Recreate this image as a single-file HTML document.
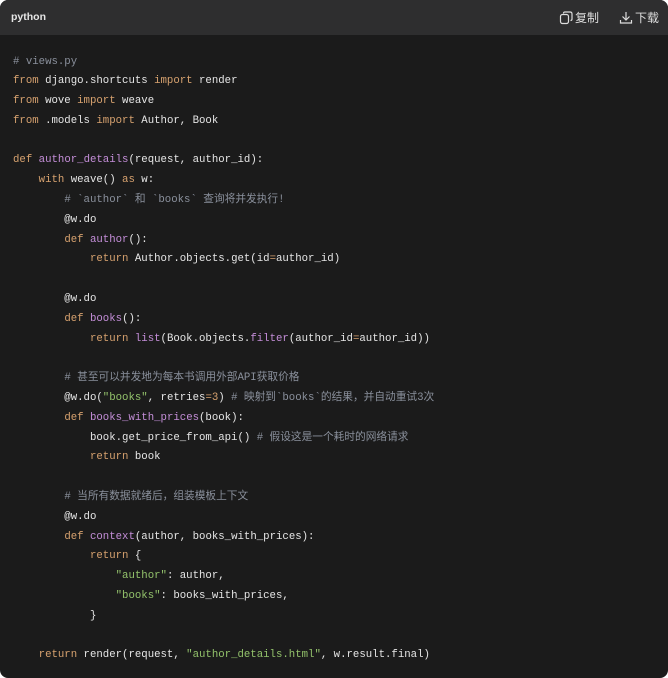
<!DOCTYPE html>
<html><head><meta charset="utf-8"><style>
html,body{margin:0;padding:0;background:#fff;width:668px;height:678px;overflow:hidden}
.box{position:absolute;left:0;top:0;width:668px;height:678px;border-radius:8px;overflow:hidden;background:#1b1b1b}
.hd{height:35px;background:#2e2e2f;position:relative;font-family:"Liberation Sans","Noto Sans CJK SC",sans-serif;color:#e6e6e6}
.hd .lang{position:absolute;left:11px;top:11px;font-size:10.5px;font-weight:bold}
.hd .btn{position:absolute;top:9px;font-size:12px;display:flex;align-items:center;gap:2px;color:#ddd}
pre{margin:0;position:absolute;left:13px;top:52.5px;font-family:"Liberation Mono","Noto Sans CJK SC",monospace;font-size:10.7px;line-height:19.8px;color:#e6e6e6}
.k{color:#d7a26f}.f{color:#c48ed8}.s{color:#93c26b}.c{color:#8a909c}.n{color:#d7a26f}
</style></head><body><div class="box">
<div class="hd"><span class="lang">python</span>
<span class="btn" style="left:559px"><svg width="14" height="14" viewBox="0 0 14 14" fill="none" stroke="#ddd" stroke-width="1.2"><rect x="1.5" y="3.5" width="8" height="9" rx="2"/><path d="M4.5 2.5q0-1.5 1.5-1.5h5q2 0 2 2v5q0 1.5-1.5 1.5"/></svg>复制</span>
<span class="btn" style="left:619px"><svg width="14" height="14" viewBox="0 0 14 14" fill="none" stroke="#ddd" stroke-width="1.2"><path d="M7 1v8M3.5 5.5 7 9l3.5-3.5M1.5 9v3h11V9"/></svg>下载</span>
</div>
<pre><span class="c"># views.py</span>
<span class="k">from</span> django.shortcuts <span class="k">import</span> render
<span class="k">from</span> wove <span class="k">import</span> weave
<span class="k">from</span> .models <span class="k">import</span> Author, Book

<span class="k">def</span> <span class="f">author_details</span>(request, author_id):
    <span class="k">with</span> weave() <span class="k">as</span> w:
        <span class="c"># `author` 和 `books` 查询将并发执行!</span>
        @w.do
        <span class="k">def</span> <span class="f">author</span>():
            <span class="k">return</span> Author.objects.get(id<span class="n">=</span>author_id)

        @w.do
        <span class="k">def</span> <span class="f">books</span>():
            <span class="k">return</span> <span class="f">list</span>(Book.objects.<span class="f">filter</span>(author_id<span class="n">=</span>author_id))

        <span class="c"># 甚至可以并发地为每本书调用外部API获取价格</span>
        @w.do(<span class="s">"books"</span>, retries<span class="n">=3</span>) <span class="c"># 映射到`books`的结果，并自动重试3次</span>
        <span class="k">def</span> <span class="f">books_with_prices</span>(book):
            book.get_price_from_api() <span class="c"># 假设这是一个耗时的网络请求</span>
            <span class="k">return</span> book

        <span class="c"># 当所有数据就绪后，组装模板上下文</span>
        @w.do
        <span class="k">def</span> <span class="f">context</span>(author, books_with_prices):
            <span class="k">return</span> {
                <span class="s">"author"</span>: author,
                <span class="s">"books"</span>: books_with_prices,
            }

    <span class="k">return</span> render(request, <span class="s">"author_details.html"</span>, w.result.final)</pre>
</div></body></html>
